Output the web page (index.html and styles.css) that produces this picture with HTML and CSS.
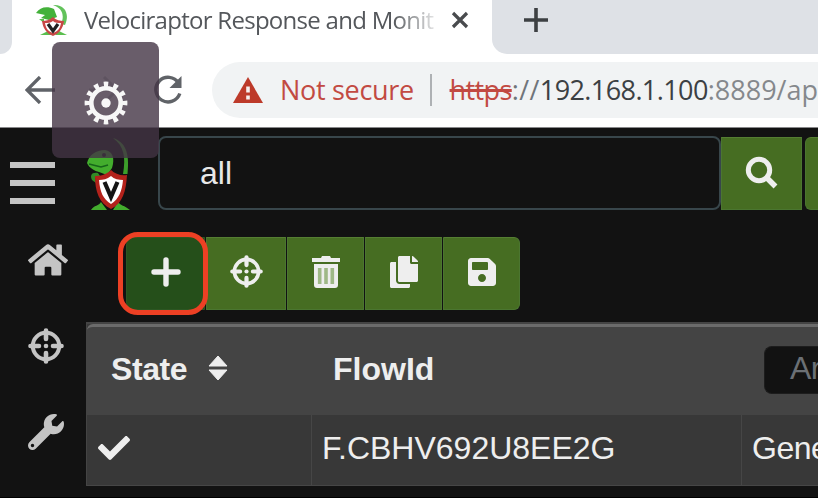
FILE: index.html
```html
<!DOCTYPE html>
<html lang="en">
<head>
<meta charset="utf-8">
<title>Velociraptor Response and Monitoring</title>
<link rel="stylesheet" href="styles.css">
</head>
<body>
<svg class="defs" width="0" height="0">
  <symbol id="crosshair" viewBox="0 0 36 36">
    <circle cx="18" cy="18" r="13.2" fill="none" stroke="currentColor" stroke-width="4"/>
    <path d="M18 2.500v8.500M18 25v8.500M2.500 18h8.500M25 18h8.500" stroke="currentColor" stroke-width="4.600" stroke-linecap="round"/>
    <circle cx="18" cy="18" r="2.300" fill="currentColor"/>
  </symbol>
  <symbol id="raptor" viewBox="0 0 46 73">
    <path d="M27 1C39 5 44 15 41.500 37L37 37C40 20 38 9 27 1Z" fill="#3c9e2a"/>
    <path d="M1 26C3 18 10 13 19 13C27 14 29 22 26 31L21 38L13 35C9 34 3 31 1 26Z" fill="#43ad2d"/>
    <path d="M3 27l12 3l7-2" fill="none" stroke="#17651a" stroke-width="1.500"/>
    <circle cx="18" cy="18" r="2" fill="#171717"/>
    <path d="M12 36C5 35 4 39 6 43L10 46L9 41L14 39Z" fill="#318b25"/>
    <path d="M5 73C8 68 13 69 15 65L21 73ZM44 73C38 68 35 69 32 65L27 73Z" fill="#43ad2d"/>
    <path d="M25 33C20 38 14 39 9 39C9 54 13 66 25 72C37 66 40 54 41 38C35 39 29 37 25 33Z" fill="#b3221b"/>
    <path d="M25 39C21 42 17 43 13 43C14 55 17 62 25 67C33 62 36 54 37 43C33 43 28 42 25 39Z" fill="#fff"/>
    <path d="M18.500 45l6.500 15l6.500-15" fill="none" stroke="#151515" stroke-width="4.200"/>
  </symbol>
</svg>

<div class="screen">
  <header class="tabs">
    <div class="tab-prev"></div>
    <div class="tab">
      <svg class="favicon" viewBox="0 0 32 33">
        <path d="M17 1C29 0 34 10 29 21L25 20C29 11 26 4 17 1Z" fill="#62c25b"/>
        <path d="M0 9C4 3 11 2 18 5L21 13L13 16L5 14L9 11Z" fill="#43b13a"/>
        <path d="M3 15l5 0v4zM4 31l8-4l4 4zM31 31l-8-4l-4 4z" fill="#5abe4e"/>
        <path d="M17 13C13 16 10 17 6 17C7 24 10 29 17 32C24 29 27 24 28 17C24 17 20 16 17 13Z" fill="#c94746"/>
        <path d="M17 17C14 19 12 19 9 19C10 25 12 27 17 29C22 27 24 25 25 19C22 19 19 19 17 17Z" fill="#fff"/>
        <path d="M12 20l5 7l5-7" fill="none" stroke="#222" stroke-width="3.200"/>
      </svg>
      <span class="tab-title">Velociraptor Response and Monit</span>
      <svg class="close" viewBox="0 0 18 18"><path d="M2 2L16 16M16 2L2 16" stroke="#494b4e" stroke-width="3.200"/></svg>
    </div>
    <div class="tab-rest"><svg width="24" height="24" viewBox="0 0 24 24"><path d="M12 0v24M0 12h24" stroke="#3d4043" stroke-width="3.600"/></svg></div>
  </header>

  <nav class="browser-bar">
    <svg class="back" viewBox="0 0 30 28"><path d="M15 1L2 14L15 27M2 14H30" fill="none" stroke="#606368" stroke-width="3.300"/></svg>
    <svg class="forward" viewBox="0 0 30 28"><path d="M15 1L28 14L15 27M28 14H0" fill="none" stroke="#c9cbce" stroke-width="3"/></svg>
    <svg class="reload" viewBox="0 0 30 30"><path d="M25.500 8A12.300 12.300 0 1 0 26.800 18.500" fill="none" stroke="#606368" stroke-width="3.400"/><path d="M28.500 1V13H16.500Z" fill="#606368"/></svg>
    <div class="address">
      <svg class="warn" viewBox="0 0 30 26"><path d="M15 0L30 26H0Z" fill="#bd3a2a"/><path d="M15 9.500v6M15 18.500v4" stroke="#f6efee" stroke-width="3.600"/></svg>
      <span class="not-secure">Not secure</span>
      <span class="divider"></span>
      <span class="url"><span class="scheme">https</span><span class="slashes">://</span><span class="host">192.168.1.100</span><span class="path">:8889/ap</span></span>
    </div>
  </nav>

  <div class="app">
    <aside class="sidebar">
      <div class="menu"><i></i><i></i><i></i></div>
      <svg class="home" viewBox="0 0 576 512"><path fill="currentColor" d="M280.370 148.260L96 300.110V464a16 16 0 0 0 16 16l112.060-.290a16 16 0 0 0 15.920-16V368a16 16 0 0 1 16-16h64a16 16 0 0 1 16 16v95.640a16 16 0 0 0 16 16.050L464 480a16 16 0 0 0 16-16V300L295.670 148.260a12.190 12.190 0 0 0-15.300 0zM571.600 251.470L488 182.560V44.050a12 12 0 0 0-12-12h-56a12 12 0 0 0-12 12v72.610L318.470 43a48 48 0 0 0-61 0L4.340 251.470a12 12 0 0 0-1.600 16.900l25.500 31A12 12 0 0 0 45.150 301l235.220-193.740a12.190 12.190 0 0 1 15.300 0L530.900 301a12 12 0 0 0 16.900-1.600l25.500-31a12 12 0 0 0-1.700-16.930z"/></svg>
      <svg class="hunt"><use href="#crosshair"/></svg>
      <svg class="wrench" viewBox="0 0 512 512"><path fill="currentColor" d="M507.730 109.100c-2.240-9.030-13.540-12.090-20.120-5.510l-74.360 74.360-67.880-11.310-11.310-67.880 74.360-74.360c6.620-6.620 3.430-17.900-5.660-20.160-47.380-11.740-99.550.910-136.580 37.930-39.640 39.640-50.550 97.100-34.050 147.200L18.740 402.760c-24.990 24.990-24.990 65.510 0 90.500 24.990 24.990 65.510 24.990 90.500 0l213.210-213.210c50.120 16.710 107.470 5.680 147.370-34.220 37.070-37.070 49.700-89.320 37.910-136.730zM64 472c-13.250 0-24-10.750-24-24 0-13.260 10.750-24 24-24s24 10.740 24 24c0 13.250-10.750 24-24 24z"/></svg>
    </aside>
    <main class="main">
      <div class="searchbar">
        <svg class="logo"><use href="#raptor"/></svg>
        <div class="search">all</div>
        <button class="btn search-btn"><svg width="34" height="34" viewBox="0 0 34 34"><circle cx="14" cy="14" r="10.700" fill="none" stroke="currentColor" stroke-width="5"/><path d="M21.500 21.500L30.500 30.500" stroke="currentColor" stroke-width="5.500"/></svg></button>
        <button class="btn more-btn"></button>
      </div>
      <div class="actions">
        <button class="btn add"><svg width="30" height="30" viewBox="0 0 30 30"><path d="M15 3v24M3 15h24" stroke="currentColor" stroke-width="5.400" stroke-linecap="round"/></svg></button>
        <button class="btn wide"><svg width="33" height="33"><use href="#crosshair"/></svg></button>
        <button class="btn"><svg width="28" height="32" viewBox="0 0 28 32"><path d="M2 8h24v21a3 3 0 0 1-3 3H5a3 3 0 0 1-3-3ZM0 2h9l1-2h8l1 2h9v4H0Z" fill="currentColor"/><path d="M7.700 12v16M14 12v16M20.300 12v16" stroke="#9eb886" stroke-width="3.600"/></svg></button>
        <button class="btn"><svg width="28" height="32" viewBox="0 0 448 512"><path fill="currentColor" d="M320 448v40c0 13.255-10.745 24-24 24H24c-13.255 0-24-10.745-24-24V120c0-13.255 10.745-24 24-24h72v296c0 30.879 25.121 56 56 56h168zm0-344V0H152c-13.255 0-24 10.745-24 24v368c0 13.255 10.745 24 24 24h272c13.255 0 24-10.745 24-24V128H344c-13.200 0-24-10.800-24-24zm120.971-31.029L375.029 7.029A24 24 0 0 0 358.059 0H352v96h96v-6.059a24 24 0 0 0-7.029-16.970z"/></svg></button>
        <button class="btn last"><svg width="28" height="32" viewBox="0 0 448 512"><path fill="currentColor" d="M433.941 129.941l-83.882-83.882A48 48 0 0 0 316.118 32H48C21.490 32 0 53.490 0 80v352c0 26.510 21.490 48 48 48h352c26.510 0 48-21.490 48-48V163.882a48 48 0 0 0-14.059-33.941zM224 416c-35.346 0-64-28.654-64-64s28.654-64 64-64s64 28.654 64 64s-28.654 64-64 64zm96-304.520V212c0 6.627-5.373 12-12 12H76c-6.627 0-12-5.373-12-12V108c0-6.627 5.373-12 12-12h228.520c3.183 0 6.235 1.264 8.485 3.515l3.480 3.480A11.996 11.996 0 0 1 320 111.480z"/></svg></button>
      </div>
      <section class="table">
        <div class="row head">
          <div class="cell c1"><span class="state">State</span><svg class="sort" viewBox="0 0 20 26"><path d="M10 1L19 11H1ZM10 25L1 15H19Z" fill="currentColor" stroke="currentColor" stroke-linejoin="round"/></svg></div>
          <div class="cell c2">FlowId</div>
          <div class="cell c3"><span class="filter">Ar</span></div>
        </div>
        <div class="row body">
          <div class="cell c1"><svg class="check" viewBox="0 0 512 512"><path fill="currentColor" d="M173.898 439.404l-166.400-166.400c-9.997-9.997-9.997-26.206 0-36.204l36.203-36.204c9.997-9.998 26.207-9.998 36.204 0L192 312.690 432.095 72.596c9.997-9.997 26.207-9.997 36.204 0l36.203 36.204c9.997 9.997 9.997 26.206 0 36.204l-294.400 294.401c-9.998 9.997-26.207 9.997-36.204-.001z"/></svg></div>
          <div class="cell c2">F.CBHV692U8EE2G</div>
          <div class="cell c3">Gene</div>
        </div>
      </section>
    </main>
  </div>
  <div class="highlight"></div>
  <div class="settings">
    <svg width="44" height="46" viewBox="-22 -23 44 46"><circle r="14.700" fill="none" stroke="#f7f7f7" stroke-width="4.600"/><circle r="4.700" fill="#f7f7f7"/><circle r="18.700" fill="none" stroke="#f7f7f7" stroke-width="5.400" pathLength="120" stroke-dasharray="4.600 5.400" stroke-dashoffset="2.300"/></svg>
  </div>
</div>
</body>
</html>
```
FILE: styles.css
```css
* { box-sizing: border-box; }
body { margin: 0; overflow: hidden; background: #121212; }
svg { display: block; flex: none; }
.defs { position: absolute; }
.screen { position: relative; width: 818px; height: 498px; overflow: hidden; font-family: "Liberation Sans", sans-serif; }

.tabs { display: flex; height: 54px; background: #fff; }
.tab-prev { width: 12px; background: #dee1e6; border-bottom-right-radius: 12px; }
.tab { width: 480px; display: flex; align-items: center; height: 40px; padding-left: 24px; }
.favicon { width: 32px; height: 33px; }
.tab-title { width: 351px; margin-left: 16px; overflow: hidden; white-space: nowrap; font: 24px/34px "Open Sans", sans-serif; letter-spacing: -0.72px; color: #54575b; -webkit-mask-image: linear-gradient(90deg, #000 88%, rgba(0, 0, 0, .15)); mask-image: linear-gradient(90deg, #000 88%, rgba(0, 0, 0, .15)); }
.close { width: 18px; height: 18px; margin-left: 16px; }
.tab-rest { flex: 1; padding: 8px 0 0 32px; background: #dee1e6; border-bottom-left-radius: 15px; }

.browser-bar { display: flex; align-items: center; height: 74px; padding: 0 0 2px 25px; background: #fff; border-bottom: 1px solid #88888a; }
.back { width: 30px; height: 28px; }
.forward { width: 30px; height: 28px; margin-left: 34px; }
.reload { width: 30px; height: 30px; margin-left: 34px; }
.address { display: flex; align-items: center; flex: none; width: 606px; height: 56px; margin-left: 29px; padding-left: 21px; border-radius: 28px 0 0 28px; background: #f1f3f4; font: 27px/40px "Open Sans", sans-serif; white-space: nowrap; }
.warn { width: 30px; height: 26px; }
.not-secure { width: 133px; margin-left: 17px; color: #c24a42; letter-spacing: -0.3px; }
.divider { width: 2px; height: 32px; margin: 0 18px 0 17px; background: #aeb1b4; }
.url { letter-spacing: -0.6px; }
.scheme { color: #c24a42; text-decoration: line-through; text-decoration-thickness: 3px; }
.slashes { color: #70757a; letter-spacing: 0.4px; }
.host { color: #3c4043; }
.path { color: #85888c; letter-spacing: 0; }

.app { display: flex; height: 370px; background: #121212; border-bottom: 1px solid #000; }
.sidebar { flex: none; width: 86px; color: #c4c4c4; }
.menu { display: flex; flex-direction: column; gap: 12px; width: 45px; margin: 34px 0 0 10px; }
.menu i { height: 6px; background: #c4c4c4; }
.home { width: 40px; height: 36px; margin: 38px 0 0 28px; }
.hunt { width: 36px; height: 36px; margin: 50px 0 0 28px; }
.wrench { width: 36px; height: 36px; margin: 50px 0 0 28px; }
.main { flex: none; width: 732px; }

.searchbar { display: flex; height: 83px; padding-top: 8px; }
.logo { width: 46px; height: 73px; margin-top: 1px; }
.search { flex: none; width: 563px; height: 74px; margin-left: 26px; padding-left: 40px; border: 2px solid #38464b; border-radius: 8px; color: #e8e8e8; font-size: 32px; line-height: 70px; }
.btn { display: flex; align-items: center; justify-content: center; flex: none; width: 77px; height: 73px; margin: 0 1px 0 0; padding: 0 0 4px; border: 1px solid #4b7630; border-top-color: #557e32; background: #466d22; color: #eee; }
.search-btn { width: 81px; margin-top: 1px; padding-bottom: 2px; }
.more-btn { width: 14px; margin: 1px 0 0 2px; border-right: 0; border-radius: 6px 0 0 6px; }
.actions { display: flex; height: 111px; padding: 26px 0 0 40px; }
.add { width: 79px; background: #254f1a; border-color: #2c5622; border-radius: 8px 0 0 8px; }
.wide { width: 80px; }
.last { border-radius: 0 6px 6px 0; }

.table { height: 164px; border-top: 2px solid #444; border-left: 1px solid #444; background: #383838; color: #eee; font-size: 32px; }
.row { display: flex; }
.cell { display: flex; align-items: center; flex: none; white-space: nowrap; }
.head { height: 91px; border-top: 3px solid #6b6b6b; border-top-left-radius: 6px; background: #444; font-weight: bold; }
.c1 { width: 224px; }
.c2 { width: 430px; }
.c3 { width: 77px; }
.head .cell { padding-bottom: 4px; }
.head .c1 { padding-left: 24px; }
.state { letter-spacing: -0.4px; }
.sort { width: 20px; height: 26px; margin: 0 0 2px 21px; }
.head .c2 { padding-left: 22px; }
.head .c3 { padding: 0 0 2px 23px; }
.filter { flex: none; width: 54px; height: 48px; padding-left: 25px; border: 1px solid #1d1d1d; border-right: 0; border-radius: 8px 0 0 8px; background: #121212; color: #6b7075; font-weight: normal; letter-spacing: -0.5px; line-height: 43px; }
.body { height: 71px; border-bottom: 1px solid #464646; }
.body .cell { padding: 0 0 4px 10px; }
.body .c1 { padding-left: 11px; }
.body .c2, .body .c3 { border-left: 1px solid #464646; }
.check { width: 32px; height: 32px; }
.body .c3 { letter-spacing: -0.5px; }

.highlight { position: absolute; left: 118px; top: 232px; width: 90px; height: 83px; border: 5px solid #ed4024; border-radius: 20px; }
.settings { position: absolute; left: 52px; top: 42px; width: 107px; height: 116px; padding: 38px 0 0 32px; border-radius: 8px; background: rgba(68, 52, 69, .8); }
```
